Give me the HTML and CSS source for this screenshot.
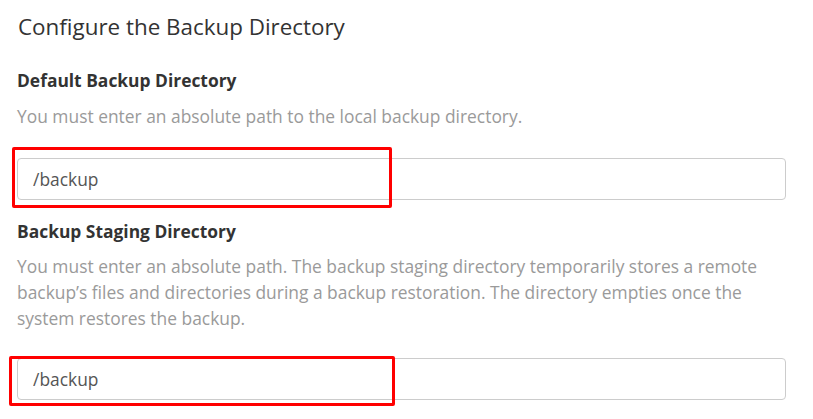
FILE: index.html
```html
<!DOCTYPE html>
<html lang="en">
<head>
<meta charset="utf-8">
<title>Configure the Backup Directory</title>
<link rel="stylesheet" href="styles.css">
</head>
<body>
<main class="panel">
  <h1 class="title">Configure the Backup Directory</h1>

  <section class="group group-default">
    <h2 class="label">Default Backup Directory</h2>
    <p class="help">You must enter an absolute path to the local backup directory.</p>
    <div class="field">
      <input class="input" type="text" value="/backup">
      <span class="mark mark-one"></span>
    </div>
  </section>

  <section class="group group-staging">
    <h2 class="label">Backup Staging Directory</h2>
    <p class="help">You must enter an absolute path. The backup staging directory temporarily stores a remote backup’s files and directories during a backup restoration. The directory empties once the system restores the backup.</p>
    <div class="field">
      <input class="input" type="text" value="/backup">
      <span class="mark mark-two"></span>
    </div>
  </section>
</main>
</body>
</html>
```
FILE: styles.css
```css
html, body {
  margin: 0;
  padding: 0;
  background: #ffffff;
}

body {
  font-family: "Open Sans", "Liberation Sans", sans-serif;
  color: #333333;
  min-height: 419px;
}

.panel {
  width: 769px;
  padding: 10px 0 0 17px;
  display: flex;
  flex-direction: column;
}

.title {
  margin: 0;
  font-size: 22.4px;
  font-weight: 400;
  line-height: 33px;
  color: #333333;
  padding-left: 1px;
}

.group {
  display: flex;
  flex-direction: column;
}

.group-default {
  margin-top: 26px;
}

.group-staging {
  margin-top: 20px;
}

.label {
  margin: 0;
  font-size: 17.4px;
  font-weight: 700;
  line-height: 22px;
  color: #333333;
}

.help {
  margin: 12px 0 0;
  font-size: 17.4px;
  line-height: 26px;
  color: #9a9a9a;
}

.group-default .help {
  margin-bottom: 29px;
}

.group-staging .help {
  margin-top: 11px;
  margin-bottom: 27px;
}

.field {
  position: relative;
}

.input {
  display: block;
  box-sizing: border-box;
  width: 769px;
  height: 42px;
  margin: 0;
  padding: 0 15px;
  border: 1px solid #cccccc;
  border-radius: 4px;
  background: #ffffff;
  font-family: "Open Sans", "Liberation Sans", sans-serif;
  font-size: 17.4px;
  color: #555555;
  outline: none;
}

.mark {
  position: absolute;
  box-sizing: border-box;
  border: 3px solid #ff0000;
  border-radius: 2px;
  pointer-events: none;
}

.mark-one {
  left: -5px;
  top: -11px;
  width: 380px;
  height: 61px;
}

.mark-two {
  left: -8px;
  top: -2px;
  width: 386px;
  height: 50px;
}
```
